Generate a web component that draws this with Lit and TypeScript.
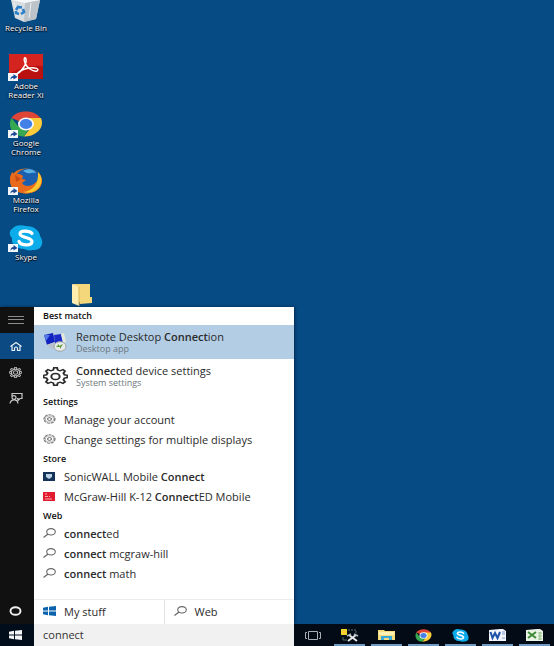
import { LitElement, html, svg, css } from "lit";
import { customElement } from "lit/decorators.js";

const shortcut = svg`<rect x="-1" y="19" width="10" height="8" fill="#f3f6fb"/><path d="M1.500 26c0-3 1-4 3-4v-2l4 3-4 2.500v-1.500c-1.500 0-2.500.6-3 2z" fill="#1d4a95"/>`;

const chromeShape = svg`
  <path d="M17 13 2.500 7C5 3 10 .5 17 .5S29 3 32 8H17z" fill="#df4537"/>
  <path d="M2.500 7C-1 13 1 25 15 25.500L21 16 17 13 9 15z" fill="#35a852"/>
  <path d="M17 7h15c4 9-4 18.500-17 18.500L23 15z" fill="#fbcb3a"/>
  <ellipse cx="17" cy="13" rx="8" ry="6.500" fill="#f5f7f8"/>
  <ellipse cx="17" cy="13" rx="6.200" ry="5" fill="#4280e8"/>`;

const skypeShape = svg`
  <path d="M3 4C7-1 13 0 17 1c8 0 14 5 14 10 5 7 1 15-7 14-4 1-6 0-9-1C7 24 2 19 3 13 0 10 0 6 3 4z" fill="#0cabe9"/>
  <path d="M23 8.500C21 5.500 11 5 11 9s12 3 12 7.500S12 21 10 16.500" fill="none" stroke="#fff" stroke-width="3.200" stroke-linecap="round"/>`;

const gearShape = svg`<path d="M10.500 1h3l.7 3 2.200 1 2.800-1.600 2 2.100L19.600 8l1 2.300 2.900.6v3l-2.900.7-1 2.200 1.600 2.700-2 2.100-2.800-1.600-2.200 1-.7 3h-3l-.7-3-2.200-1L4.800 21.600l-2-2.100 1.600-2.700-1-2.200-2.900-.7v-3l2.900-.6 1-2.300-1.600-2.500 2-2.100L7.600 5l2.200-1z" fill="none" stroke="currentColor" stroke-width="1.900"/><circle cx="12" cy="12.500" r="4" fill="none" stroke="currentColor" stroke-width="1.900"/>`;

const windowsShape = svg`<path d="M0 2 5 1v4.500H0zM6 .9 13 0v5.500H6zM0 6.500h5V11l-5-1zM6 6.500h7V12l-7-.9z" fill="currentColor"/>`;

const icons = {
  bin: html`<svg width="34" height="23" viewBox="0 0 34 23">
    <path d="M2 0h29l-4 19-12 3-9-4z" fill="#d9dde0"/><path d="M16 2 31 0l-4 19-12 3z" fill="#bcc4ca"/>
    <path d="M2 0h29l-15 3z" fill="#f6f7f8"/><path d="m5 2 3 14M22 3l-2 15" stroke="#eef1f3"/>
    <path d="m7 10 2-3 4 .5M14 9l1 3-3 2M10 14l-3-1v-2" fill="none" stroke="#2a7fca" stroke-width="2.600"/></svg>`,
  adobe: html`<svg width="36" height="27" viewBox="-1 0 36 27">
    <rect y="0" width="34" height="25" fill="#b9110f"/><path d="M0 0h34v12Q16 10 0 20z" fill="#d52320"/>
    <path d="M8 20C13 17 18 10 17 5c-1-3-3 0-1 4 2 5 8 9 12 8 3-2-2-4-8-3s-10 3-12 6z" fill="none" stroke="#fff" stroke-width="1.500"/>${shortcut}</svg>`,
  chrome: html`<svg width="36" height="27" viewBox="-1 0 36 27">${chromeShape}${shortcut}</svg>`,
  firefox: html`<svg width="36" height="27" viewBox="-1 0 36 27">
    <ellipse cx="17" cy="13" rx="16" ry="12.500" fill="#e8701a"/><ellipse cx="19" cy="10" rx="12" ry="9.500" fill="#1b5fae"/>
    <path d="M14 3c5-3 11-2 13 2-4-1-6 1-9 0z" fill="#58b3e6"/>
    <path d="M1 9 3 4l3 3c3-2 6-1 8 1l-1 3 4 1-4 3c2 4 9 4 13 0 4-3 5-7 3-11 6 5 5 15-2 19-9 5-22 2-25-6z" fill="#ea6a1c"/>
    <path d="M29 4c6 6 4 15-3 19-4 2-9 2-12 1 9-1 16-7 15-20z" fill="#fbc62f"/><path d="m6 7 6 4-5 3z" fill="#c94b14"/>${shortcut}</svg>`,
  skype: html`<svg width="36" height="27" viewBox="-1 0 36 27">${skypeShape}${shortcut}</svg>`,
  folder: html`<svg width="22" height="25" viewBox="0 0 22 25"><path d="M2 2h17v13h2v6l-12 1z" fill="#f4d67b"/><path d="M1 2l7 3v19l-7-3z" fill="#fdeeb0"/><path d="M8 5v19" stroke="#d8b55b"/></svg>`,
  menu: html`<svg width="16" height="8" viewBox="0 0 16 8"><path d="M0 .5h16M0 3.500h16M0 7.500h16" stroke="#8d8d8d"/></svg>`,
  home: html`<svg width="12" height="9" viewBox="0 0 12 9"><path d="m.5 4.500 5.500-4 5.500 4M2 4v4.500h2.500V6q1.500-2 3 0v2.500H10V4" fill="none" stroke="#e6eef6" stroke-width="1.200"/></svg>`,
  railGear: html`<svg width="13" height="11" viewBox="0 0 24 25" preserveAspectRatio="none"><g color="#bfbfbf">${gearShape}</g><circle cx="12" cy="12.500" r="7.500" fill="none" stroke="#bfbfbf" stroke-width="2"/></svg>`,
  feedback: html`<svg width="14" height="11" viewBox="0 0 14 11"><path d="M3 3V.5h10v5h-2l-2 2v-2H8" fill="none" stroke="#c9c9c9" stroke-width="1.200"/><ellipse cx="5" cy="4.500" rx="2" ry="1.800" fill="none" stroke="#c9c9c9" stroke-width="1.200"/><path d="M1 10.500Q1.500 7 5 6.800T9 10.500" fill="none" stroke="#c9c9c9" stroke-width="1.200"/></svg>`,
  cortana: html`<svg width="13" height="10" viewBox="0 0 13 10"><ellipse cx="6.500" cy="5" rx="5" ry="3.800" fill="none" stroke="#f1f1f1" stroke-width="1.900"/></svg>`,
  windows: html`<svg width="13" height="10" viewBox="0 0 13 12" preserveAspectRatio="none">${windowsShape}</svg>`,
  remote: html`<svg width="24" height="19" viewBox="0 0 24 19"><path d="m1 2 9-2 2 9-8 3z" fill="#1122c0"/><path d="m1 2 6 0-4 6z" fill="#5279e8"/><path d="m3 12 9-3 4 4-7 3z" fill="#b9c3ce"/><path d="m11 2 7-1 2 8-8 1z" fill="#1a2bc8"/><path d="M18 1l3-1 2 9-3 1z" fill="#e6e8dc"/><ellipse cx="17" cy="13.500" rx="6" ry="4.800" fill="#e6eae8" stroke="#9da6a8"/><path d="m13 14 3-3v2l4-2-3 5v-2z" fill="#5c9d32"/></svg>`,
  bigGear: html`<svg width="25" height="19" viewBox="0 0 24 25" preserveAspectRatio="none">${gearShape}</svg>`,
  gear: html`<svg width="13" height="10" viewBox="0 0 24 25" preserveAspectRatio="none"><ellipse cx="12" cy="12.500" rx="10" ry="10.500" fill="none" stroke="#777" stroke-width="2.500" stroke-dasharray="6 1.500"/><circle cx="12" cy="12.500" r="7.500" fill="none" stroke="#999" stroke-width="1.500"/><circle cx="12" cy="12.500" r="3.500" fill="none" stroke="#555" stroke-width="2"/></svg>`,
  sonic: html`<svg width="12" height="9" viewBox="0 0 12 9"><rect width="12" height="9" fill="#163458"/><path d="M3 2h6v3L6 7 3 5z" fill="#b9d2e8"/></svg>`,
  mcgraw: html`<svg width="12" height="9" viewBox="0 0 12 9"><rect width="12" height="9" fill="#e31b2e"/><path d="M2 2h2M2 4.500h3M2 7h7M6 4l1 1" stroke="#f9a9ac" stroke-width="1"/></svg>`,
  search: html`<svg width="13" height="10" viewBox="0 0 13 10"><ellipse cx="8" cy="3.800" rx="4.300" ry="3.200" fill="none" stroke="#666" stroke-width="1.100"/><path d="M5 6 .5 9.500" stroke="#666" stroke-width="1.200"/></svg>`,
  taskView: html`<svg width="16" height="9" viewBox="0 0 16 9"><path d="M3.500.5h9v8h-9zM2 1.500H.5v6H2M14 1.500h1.500v6H14" fill="none" stroke="#a9afb3"/></svg>`,
  tools: html`<svg width="18" height="13" viewBox="0 0 18 13"><path d="M0 0h6v6H0z" fill="#f4d02e"/><path d="M7 1h8v3" fill="none" stroke="#577064" stroke-dasharray="2 1"/><path d="M2 8v3h4" fill="none" stroke="#577064"/><path d="m8 6 8 6M15 6l-8 6" stroke="#e4e6e6" stroke-width="2"/><path d="m6 7 4-2M13 5l4 2" stroke="#aeb5b8" stroke-width="1.500"/></svg>`,
  explorer: html`<svg width="17" height="12" viewBox="0 0 17 12"><path d="M0 1h6l1 1h10v9H0z" fill="#f7dc7d"/><path d="M1 3h15v3H1z" fill="#fff0b3"/><path d="M3 11V7h11v4h-3V9H6v2z" fill="#39a9dc"/></svg>`,
  chromeSmall: html`<svg width="17" height="13" viewBox="0 0 34 26">${chromeShape}</svg>`,
  skypeSmall: html`<svg width="17" height="13" viewBox="0 0 34 26">${skypeShape}</svg>`,
  word: html`<svg width="17" height="12" viewBox="0 0 17 12"><path d="M0 1 11 0h3l3 2v10H0z" fill="#f2f5fb"/><path d="M13 3h3M13 5h3M13 9h3" stroke="#7b9ad0"/><path d="m1.500 3 2 6 2.500-5 2.500 5 2.500-6" fill="none" stroke="#1d50a8" stroke-width="2"/></svg>`,
  excel: html`<svg width="17" height="12" viewBox="0 0 17 12"><path d="M0 1 11 0h3l3 2v10H0z" fill="#eaf4e6"/><path d="M12 4h4M12 7h4M12 10h4M14 3v8" stroke="#92bd86"/><path d="m2 3 8 6M10 3 2 9" stroke="#3c8a35" stroke-width="2"/></svg>`,
};

const reset = css`
  * { box-sizing: border-box; }
  svg { display: block; flex: none; }
  button, input { border: 0; margin: 0; padding: 0; background: none; color: inherit; font: inherit; text-align: left; border-radius: 0; }
`;

@customElement("desktop-icons")
class DesktopIcons extends LitElement {
  static styles = [reset, css`
    :host { display: block; }
    .grid { display: grid; grid-template-columns: 52px 60px; grid-template-rows: 54px repeat(4, 57px) 25px; }
    .item { grid-column: 1; display: flex; flex-direction: column; align-items: center; font-size: 8px; line-height: 9px; color: #fff; text-shadow: 0 1px 1px #000, 0 0 2px #001; }
    .label { text-align: center; white-space: pre-line; }
    .folder { grid-area: 6 / 2; }
  `];
  render() {
    const items = [["bin", "Recycle Bin"], ["adobe", "Adobe\nReader XI"], ["chrome", "Google\nChrome"], ["firefox", "Mozilla\nFirefox"], ["skype", "Skype"]] as const;
    return html`<div class="grid">
      ${items.map(([icon, label]) => html`<button class="item">${icons[icon]}<span class="label">${label}</span></button>`)}
      <button class="item folder" aria-label="Folder">${icons.folder}</button>
    </div>`;
  }
}

@customElement("search-panel")
class SearchPanel extends LitElement {
  static styles = [reset, css`
    :host { display: flex; width: 294px; color: #2b2b2b; font-size: 11px; box-shadow: 1px 0 3px #03294d; }
    .rail { width: 34px; flex: none; background: #111; display: flex; flex-direction: column; }
    .rail button { height: 26px; padding-right: 3px; display: flex; align-items: center; justify-content: center; }
    .rail .active { background: #0c4a84; }
    .rail .last { margin-top: auto; }
    .panel { flex: 1; background: #fff; display: flex; flex-direction: column; }
    .heading { margin: 0; padding-left: 9px; font-size: 9px; line-height: 17px; font-weight: 600; color: #111; }
    .heading.first { line-height: 18px; }
    .app { display: flex; align-items: center; width: 100%; height: 34px; padding-left: 9px; gap: 8px; }
    .app.selected { background: #b2cde4; }
    .icon { width: 25px; }
    .title, .kind { display: block; }
    .title { line-height: 13px; }
    .kind { font-size: 9px; line-height: 12px; color: #6d7780; }
    .row { display: flex; align-items: center; width: 100%; height: 20px; padding: 0 0 2px 9px; gap: 8px; white-space: nowrap; }
    .small { width: 13px; }
    b { font-weight: 600; }
    .tabs { display: flex; height: 25px; margin-top: 15px; border-top: 1px solid #ececec; }
    .tabs button { flex: 1; display: flex; align-items: center; padding: 0 0 2px 9px; gap: 8px; }
    .tabs button + button { border-left: 1px solid #e4e4e4; }
    .blue { color: #0b62ad; }
  `];
  render() {
    const row = (icon: unknown, text: unknown) => html`<button class="row"><span class="small">${icon}</span><span>${text}</span></button>`;
    return html`
      <nav class="rail">
        <button aria-label="Menu">${icons.menu}</button>
        <button class="active" aria-label="Home">${icons.home}</button>
        <button aria-label="Settings">${icons.railGear}</button>
        <button aria-label="Feedback">${icons.feedback}</button>
        <button class="last" aria-label="Cortana">${icons.cortana}</button>
      </nav>
      <section class="panel">
        <h2 class="heading first">Best match</h2>
        <button class="app selected"><span class="icon">${icons.remote}</span><span><span class="title">Remote Desktop <b>Connect</b>ion</span><span class="kind">Desktop app</span></span></button>
        <button class="app"><span class="icon">${icons.bigGear}</span><span><span class="title"><b>Connect</b>ed device settings</span><span class="kind">System settings</span></span></button>
        <h2 class="heading">Settings</h2>
        ${row(icons.gear, "Manage your account")}
        ${row(icons.gear, "Change settings for multiple displays")}
        <h2 class="heading">Store</h2>
        ${row(icons.sonic, html`SonicWALL Mobile <b>Connect</b>`)}
        ${row(icons.mcgraw, html`McGraw-Hill K-12 <b>Connect</b>ED Mobile`)}
        <h2 class="heading">Web</h2>
        ${row(icons.search, html`<b>connect</b>ed`)}
        ${row(icons.search, html`<b>connect</b> mcgraw-hill`)}
        ${row(icons.search, html`<b>connect</b> math`)}
        <div class="tabs">
          <button><span class="small blue">${icons.windows}</span>My stuff</button>
          <button><span class="small">${icons.search}</span>Web</button>
        </div>
      </section>`;
  }
}

@customElement("task-bar")
class TaskBar extends LitElement {
  static styles = [reset, css`
    :host { display: flex; height: 22px; background: #020b16; }
    .start { width: 34px; padding-right: 3px; display: flex; align-items: center; justify-content: center; color: #f4f6f8; background: #020d1c; }
    .query { width: 260px; height: 22px; padding: 0 0 2px 9px; background: #f1f1f1; color: #333; font-size: 11px; outline: 0; }
    .app { width: 37px; display: flex; align-items: center; justify-content: center; position: relative; }
    .open::after { content: ""; position: absolute; left: 3px; right: 3px; bottom: 0; height: 2px; background: #6f9cc4; }
  `];
  render() {
    const apps = [["tools", "Tools"], ["explorer", "File Explorer"], ["chromeSmall", "Chrome"], ["skypeSmall", "Skype"], ["word", "Word"], ["excel", "Excel"]] as const;
    return html`
      <button class="start" aria-label="Start">${icons.windows}</button>
      <input class="query" type="text" aria-label="Search" .value=${"connect"}>
      <button class="app" aria-label="Task View">${icons.taskView}</button>
      ${apps.map(([icon, label]) => html`<button class="app open" aria-label=${label}>${icons[icon]}</button>`)}`;
  }
}

@customElement("app-root")
class AppRoot extends LitElement {
  static styles = css`
    :host { display: flex; flex-direction: column; min-height: 100vh; background: #074b84; font-family: "Open Sans", "Noto Sans", sans-serif; overflow: hidden; }
    desktop-icons { flex: 1; }
  `;
  render() {
    return html`<desktop-icons></desktop-icons><search-panel></search-panel><task-bar></task-bar>`;
  }
}
